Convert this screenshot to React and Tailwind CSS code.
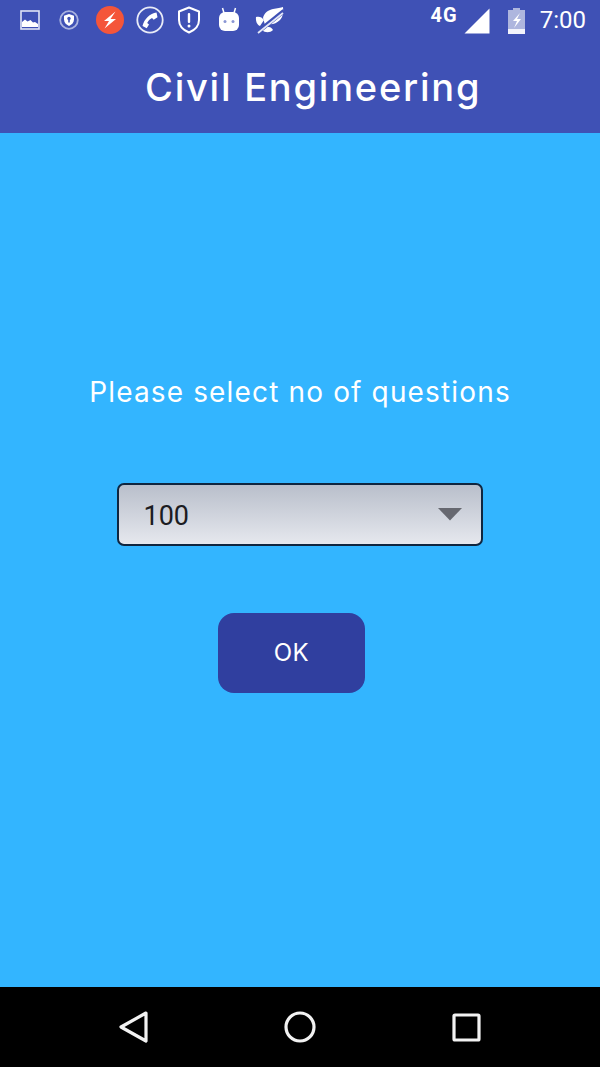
export default function App() {
  return (
    <div className="w-[600px] h-[1067px] flex flex-col overflow-hidden bg-[#33b5ff]" style={{ fontFamily: "Inter, 'Open Sans', sans-serif" }}>
      <header className="h-[133px] shrink-0 bg-[#3f51b5] flex flex-col">
        <div className="h-[40px] flex items-center justify-between pr-[14px] pl-[19px] text-white">
          <div className="flex items-center">
            <svg width="22" height="22" viewBox="0 0 22 22" className="mr-[18px] -mt-[1px]" fill="none">
              <rect x="2" y="2" width="18" height="18" stroke="#dfe3f6" strokeWidth="1.6" />
              <path d="M3 18v-5l3-2.500 2.500 2 3-1.500 2.500 2.500 2-.5 3 2V18z" fill="#fff" />
            </svg>
            <svg width="20" height="22" viewBox="0 0 20 22" className="mr-[16px] -mt-[1px]" fill="none">
              <circle cx="10" cy="11" r="8.800" stroke="#aab3e0" strokeWidth="1.800" />
              <path d="M10 5l5 1.700v3.800c0 3-2.200 5.200-5 6.500-2.800-1.300-5-3.500-5-6.500V6.700z" fill="#fff" />
              <circle cx="10" cy="9.500" r="1.700" fill="#3f51b5" />
              <rect x="9.200" y="10" width="1.600" height="3.500" fill="#3f51b5" />
            </svg>
            <svg width="28" height="28" viewBox="0 0 28 28" className="mr-[13px] ml-[1px]">
              <circle cx="14" cy="14" r="14" fill="#f4553a" />
              <path d="M19.500 5.500L8 15h5l-4.500 7.500L20 13h-5.500z" fill="#fff" />
            </svg>
            <svg width="28" height="28" viewBox="0 0 28 28" className="mr-[13px] -ml-[1px]" fill="none">
              <circle cx="14" cy="14" r="12.700" stroke="#e8ebf7" strokeWidth="1.800" />
              <path d="M20.500 6.500c-6.500 1-12.500 6.500-14 13.500l4.200 2.200 2.300-3.800-1.800-1.500c1-2 2.600-3.600 4.800-4.800l1.700 1.700 3.800-2.600z" fill="#fff" />
            </svg>
            <svg width="24" height="28" viewBox="0 0 24 28" className="mr-[18px]" fill="none">
              <path d="M12 1.500l10 4v8.500c0 6-4 10-10 12.500C6 24 2 20 2 14V5.500z" stroke="#fff" strokeWidth="2" strokeLinejoin="round" />
              <rect x="10.800" y="7" width="2.400" height="10" rx="1" fill="#fff" />
              <circle cx="12" cy="20" r="1.500" fill="#fff" />
            </svg>
            <svg width="20" height="26" viewBox="0 0 20 26" className="mr-[16px] -mt-[1px]" fill="none">
              <path d="M5 6L3.500 1M15 6l1.500-5" stroke="#fff" strokeWidth="1.500" />
              <rect x="0" y="5" width="20" height="19" rx="6" fill="#fff" />
              <circle cx="6" cy="14.500" r="1.500" fill="#8a96d4" />
              <circle cx="14" cy="14.500" r="1.500" fill="#8a96d4" />
            </svg>
            <svg width="30" height="28" viewBox="0 0 30 28" fill="none">
              <path d="M8 12c1-5 5-8 10-9 4-.8 8-1 10-2 .5 5 0 10-3 13-3.500 3.500-8 5-12 4l-3 1z" fill="#fff" />
              <path d="M1 11c3-1 6 0 8 3l-4 6c-3-1-4.500-5-4-9z" fill="#fff" />
              <path d="M9 21c4-1 8 0 9 3-3 3-8 3-11 0z" fill="#fff" />
              <path d="M1 27.500L29 5" stroke="#3f51b5" strokeWidth="4.500" />
              <path d="M3 27L28 7" stroke="#e4e7f7" strokeWidth="1.800" />
            </svg>
          </div>
          <div className="flex items-center">
            <span className="text-[20px] leading-none font-bold tracking-[1px] mr-[6px] -mt-[11px]" style={{ fontFamily: "Roboto, sans-serif" }}>4G</span>
            <svg width="26" height="26" viewBox="0 0 26 26" className="mr-[17px] mt-[1px]">
              <path d="M0.500 25.500L25.500 0.500V25.500z" fill="#fff" />
            </svg>
            <svg width="19" height="26" viewBox="0 0 19 26" className="mr-[14px] mt-[1px]">
              <rect x="6" y="0" width="7" height="3" fill="#aeb6de" />
              <rect x="1" y="2" width="17" height="24" fill="#aeb6de" />
              <rect x="1" y="21" width="17" height="5" fill="#f2f3fb" />
              <path d="M13 5L6 13h4l-3 7 7-9h-4z" fill="#fff" />
            </svg>
            <span className="text-[24px] leading-none font-normal" style={{ fontFamily: "Roboto, sans-serif" }}>7:00</span>
          </div>
        </div>
        <div className="flex-1 flex items-start pl-[145px] pt-[21px]">
          <h1 className="text-[38px] leading-[52px] font-medium text-white tracking-[1.770px] whitespace-nowrap">Civil Engineering</h1>
        </div>
      </header>

      <main className="flex-1 flex flex-col items-center pt-[240px]">
        <p className="text-[28px] leading-[38px] text-white font-normal tracking-[1.150px] whitespace-nowrap">Please select no of questions</p>
        <div className="mt-[72px] w-[366px] mr-[1px] h-[63px] rounded-[7px] border-2 border-[#10263f] bg-gradient-to-b from-[#b9bfcb] to-[#e6e8ee] flex items-center justify-between pl-[25px] pr-[18px]">
          <span className="text-[27px] leading-none text-[#1c1c22] mt-[3px]" style={{ fontFamily: "Roboto, sans-serif" }}>100</span>
          <svg width="26" height="14" viewBox="0 0 26 14" className="-mt-[1px]">
            <path d="M1 1h24L13 13.500z" fill="#666870" />
          </svg>
        </div>
        <button className="mt-[67px] mr-[17px] w-[147px] h-[80px] rounded-[16px] bg-[#303f9f] text-white text-[24px] font-normal tracking-[0.500px] flex items-center justify-center">OK</button>
      </main>

      <nav className="h-[80px] shrink-0 bg-black flex items-center justify-between pl-[119px] pr-[119px]">
        <svg width="30" height="34" viewBox="0 0 30 34" fill="none">
          <path d="M27 3L2 17l25 14z" stroke="#f2f2f2" strokeWidth="3.200" strokeLinejoin="round" />
        </svg>
        <svg width="32" height="32" viewBox="0 0 32 32" fill="none" className="-ml-[2px]">
          <circle cx="16" cy="16" r="14" stroke="#f2f2f2" strokeWidth="3.200" />
        </svg>
        <svg width="29" height="29" viewBox="0 0 29 29" fill="none">
          <rect x="2" y="2" width="25" height="25" rx="1" stroke="#f2f2f2" strokeWidth="3.200" />
        </svg>
      </nav>
    </div>
  );
}
